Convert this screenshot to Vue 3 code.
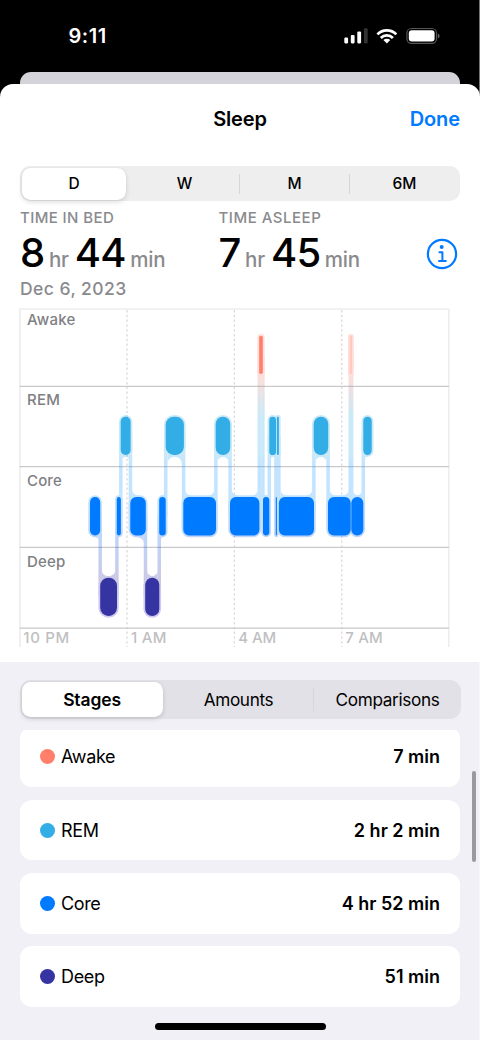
<script setup>
const PAD = 1.75

const levels = {
  awake: { y: 335.7, color: '#ff7f6b' },
  rem: { y: 416.7, color: '#32ade6' },
  core: { y: 497.1, color: '#007aff' },
  deep: { y: 577.7, color: '#3634a3' },
}
const order = ['awake', 'rem', 'core', 'deep']
const H = 38.3

// Sleep segments in time order: [stage, start, end]
const segments = [
  ['core', 90, 100.2],
  ['deep', 100.2, 117],
  ['core', 116.8, 120.9],
  ['rem', 120.7, 130.6],
  ['core', 130.3, 145.8],
  ['deep', 145.2, 159.3],
  ['core', 159.2, 165.7],
  ['rem', 165.7, 183.9],
  ['core', 183.3, 216],
  ['rem', 215.7, 230.2],
  ['core', 230, 259.4],
  ['awake', 259.2, 262.8],
  ['core', 263, 269.3],
  ['rem', 269.3, 276],
  ['core', 275.8, 276.9],
  ['rem', 276.9, 278.9],
  ['core', 278.9, 314],
  ['rem', 313.7, 328.2],
  ['core', 328, 350.7],
  ['awake', 349.8, 352],
  ['core', 351.3, 363.3],
  ['rem', 363.3, 371.7],
].map(([stage, a, b]) => ({
  stage, a, b, w: b - a, y: levels[stage].y, color: levels[stage].color,
  pale: stage === 'awake' && a > 300,
}))

const radius = (w, stage) => Math.min(w / 2, stage === 'core' ? 5.8 : 8.2)

// Connector strips between consecutive stages, with concave corners where they meet a bar
const links = []
for (let i = 0; i < segments.length - 1; i++) {
  const l = segments[i]
  const r = segments[i + 1]
  const up = order.indexOf(l.stage) < order.indexOf(r.stage) ? l : r
  const low = up === l ? r : l
  const t = (l.b + r.a) / 2
  const dir = up === l ? -1 : 1
  const top = up.y + H + PAD
  const bottom = low.y - PAD
  const ru = Math.max(0, Math.min(7, up.w / 2 - PAD))
  const rl = Math.max(0, Math.min(5.5, low.w / 2 - PAD))
  const xu = t + dir * PAD
  const xl = t - dir * PAD
  const sweep = dir < 0 ? 1 : 0
  links.push(`M${t - PAD} ${up.y + H / 2}H${t + PAD}V${low.y + H / 2}H${t - PAD}Z`)
  links.push(`M${xu} ${top - 5}H${xu + dir * ru}V${top}A${ru} ${ru} 0 0 ${sweep} ${xu} ${top + ru}Z`)
  links.push(`M${xl} ${bottom + 4}H${xl - dir * rl}V${bottom}A${rl} ${rl} 0 0 ${sweep} ${xl} ${bottom - rl}Z`)
}

const stageLabels = [
  ['Awake', 325, 48.3], ['REM', 405.3, 33], ['Core', 486, 34.8], ['Deep', 566.5, 38.3],
]
const hours = [
  ['10 PM', 23.3, 46], ['1 AM', 131, 35.5], ['4 AM', 238.2, 38], ['7 AM', 345.3, 37.3],
]
const ranges = ['D', 'W', 'M', '6M']
const tabs = ['Stages', 'Amounts', 'Comparisons']
const rows = [
  { name: 'Awake', value: '7 min', color: '#ff7f6b' },
  { name: 'REM', value: '2 hr 2 min', color: '#32ade6' },
  { name: 'Core', value: '4 hr 52 min', color: '#007aff' },
  { name: 'Deep', value: '51 min', color: '#3634a3' },
]
</script>

<template>
  <div class="screen">
    <div class="status">
      <span class="clock">9:11</span>
      <svg class="status-icons" width="98" height="20" viewBox="343 26 98 20">
        <g fill="#fff">
          <rect x="344.3" y="37.6" width="3.8" height="5.8" rx="1.1" />
          <rect x="350.8" y="35" width="3.8" height="8.4" rx="1.1" />
          <rect x="357.3" y="31.4" width="3.8" height="12" rx="1.1" />
          <rect x="363.9" y="28.3" width="3.8" height="15.1" rx="1.1" fill="#333" />
        </g>
        <g fill="none" stroke="#fff" stroke-width="2.7">
          <path d="M377.4 34.4A13.2 13.2 0 0 1 396.3 34.4" />
          <path d="M380.8 38A8.4 8.4 0 0 1 392.9 38" />
        </g>
        <path d="M383.4 40.1A5 5 0 0 1 390.3 40.1L386.85 43.5Z" fill="#fff" />
        <rect x="406.9" y="28.5" width="29.6" height="14.8" rx="4.6" fill="none" stroke="#555" stroke-width="1.2" />
        <rect x="408.8" y="30.3" width="25.8" height="11.3" rx="3" fill="#fff" />
        <path d="M437.8 33.6Q439.6 34.3 439.6 36T437.8 38.3Z" fill="#666" />
      </svg>
    </div>
    <div class="back-card"></div>

    <main class="sheet">
      <header class="nav">
        <span></span>
        <h1>Sleep</h1>
        <a class="done">Done</a>
      </header>

      <div class="ranges">
        <span v-for="(r, i) in ranges" :key="r" class="range" :class="{ on: i === 0, sep: i > 1 }">{{ r }}</span>
      </div>

      <section class="summary">
        <div class="metric bed">
          <p class="caption">TIME IN BED</p>
          <p class="figure"><b>8</b><i class="hr">hr</i><b>44</b><i>min</i></p>
          <p class="date">Dec 6, 2023</p>
        </div>
        <div class="metric">
          <p class="caption asleep">TIME ASLEEP</p>
          <p class="figure"><b>7</b><i class="hr">hr</i><b>45</b><i>min</i></p>
        </div>
        <svg class="info" width="32" height="32" viewBox="0 0 32 32" fill="none" stroke="#007aff">
          <circle cx="16" cy="16" r="14.1" stroke-width="2.2" />
          <circle cx="15.7" cy="9" r="2" fill="#007aff" stroke="none" />
          <path d="M13.4 14.2H16.4V23M13 23.1H19.8" stroke-width="2" stroke-linecap="round" stroke-linejoin="round" />
        </svg>
      </section>

      <svg class="chart" width="480" height="346" viewBox="0 304 480 346">
        <defs>
          <linearGradient id="halo" gradientUnits="userSpaceOnUse" x1="0" y1="334" x2="0" y2="618">
            <stop offset="0" stop-color="#ff7f6b" />
            <stop offset="0.14" stop-color="#ff7f6b" />
            <stop offset="0.29" stop-color="#32ade6" />
            <stop offset="0.42" stop-color="#32ade6" />
            <stop offset="0.46" stop-color="#1a98ff" />
            <stop offset="0.58" stop-color="#1a98ff" />
            <stop offset="0.715" stop-color="#0a62f0" />
            <stop offset="0.86" stop-color="#3634a3" />
            <stop offset="1" stop-color="#4a35c0" />
          </linearGradient>
        </defs>
        <g stroke="#ededed" stroke-width="1.6">
          <path d="M19.2 309H449M19.9 309V647M448.8 309V647" fill="none" />
        </g>
        <path d="M127 310V647M234.4 310V647M341.8 310V647" stroke="#d8d8da" stroke-width="1.2" stroke-dasharray="2.4 2.4" />
        <path d="M19.5 386.4H449M19.5 466.6H449M19.5 547.4H449M19.5 628.2H449" stroke="#c9c9cb" stroke-width="1.3" />
        <g fill="url(#halo)" opacity="0.26">
          <rect
            v-for="(s, i) in segments" :key="i" :x="s.a - PAD" :y="s.y - PAD" :width="s.w + PAD * 2"
            :height="H + PAD * 2" :rx="radius(s.w, s.stage) + PAD"
          />
          <path v-for="(d, i) in links" :key="'l' + i" :d="d" />
        </g>
        <g>
          <rect
            v-for="(s, i) in segments" :key="i" :x="s.a" :y="s.y" :width="s.w" :height="H"
            :rx="radius(s.w, s.stage)" :fill="s.pale ? '#ffc9c0' : s.color"
          />
        </g>
        <g class="stage-labels">
          <text v-for="[t, y, w] in stageLabels" :key="t" x="27" :y="y" :textLength="w">{{ t }}</text>
        </g>
        <g class="hour-labels">
          <text v-for="[t, x, w] in hours" :key="t" :x="x" y="643.2" :textLength="w">{{ t }}</text>
        </g>
      </svg>

      <section class="details">
        <div class="tabs">
          <span v-for="(t, i) in tabs" :key="t" class="tab" :class="{ on: i === 0, sep: i === 2 }">{{ t }}</span>
        </div>
        <div class="list">
          <div v-for="r in rows" :key="r.name" class="row">
            <span class="dot" :style="{ background: r.color }"></span>
            <span class="name">{{ r.name }}</span>
            <span class="value">{{ r.value }}</span>
          </div>
        </div>
        <div class="scrollbar"></div>
        <div class="home"></div>
      </section>
    </main>
  </div>
</template>

<style>
body { margin: 0; background: #000; }
</style>

<style scoped>
.screen {
  position: relative;
  box-sizing: border-box;
  width: 480px;
  height: 1040px;
  overflow: hidden;
  display: flex;
  flex-direction: column;
  background: #000;
  font-family: Inter, "Liberation Sans", sans-serif;
  color: #000;
}
.screen::after {
  content: "";
  position: absolute;
  top: 0;
  right: 0;
  bottom: 0;
  width: 1px;
  background: rgba(255, 255, 255, 0.45);
}
p, h1 { margin: 0; }
.status {
  height: 72px;
  flex: none;
  display: flex;
  justify-content: space-between;
  box-sizing: border-box;
  padding: 26px 39px 0 68.5px;
}
.clock { color: #fff; font-size: 20px; font-weight: 600; line-height: 21px; letter-spacing: 0.5px; }
.back-card { height: 12px; flex: none; margin: 0 20px; background: #d4d3d9; border-radius: 11px 11px 0 0; }
.sheet {
  flex: 1;
  display: flex;
  flex-direction: column;
  background: #fff;
  border-radius: 13px 13px 0 0;
}
.nav {
  height: 82px;
  box-sizing: border-box;
  padding: 22px 20px 0;
  display: grid;
  grid-template-columns: 1fr auto 1fr;
  line-height: 26px;
  font-size: 20px;
}
h1 { font-size: 20px; font-weight: 600; letter-spacing: -0.15px; }
.done { color: #007aff; font-weight: 600; justify-self: end; letter-spacing: -0.1px; }
.ranges {
  height: 35px;
  margin: 0 20px;
  box-sizing: border-box;
  padding: 2px;
  display: grid;
  grid-template-columns: 106px 1fr 1fr 1fr;
  column-gap: 3px;
  background: #eeeeef;
  border-radius: 10px;
}
.range { position: relative; text-align: center; font-size: 15.5px; font-weight: 500; line-height: 32px; }
.range.on { margin-right: 2px; }
.on { background: #fff; border-radius: 8.5px; box-shadow: 0 2px 5px rgba(0, 0, 0, 0.14), 0 0 1px rgba(0, 0, 0, 0.1); }
.sep::before {
  content: "";
  position: absolute;
  left: -2px;
  top: 6px;
  bottom: 6px;
  width: 1px;
  background: #d6d6d9;
}
.summary { height: 103px; display: flex; padding: 7px 22.5px 0 20px; box-sizing: border-box; }
.metric { flex: 1; }
.bed { flex: 0 0 198.5px; }
.caption { font-size: 15px; font-weight: 500; line-height: 20px; color: #8a8a8e; letter-spacing: 0.4px; white-space: nowrap; }
.asleep { letter-spacing: 0.52px; }
.figure { display: flex; align-items: baseline; height: 50px; line-height: 50px; white-space: nowrap; }
.figure b { font-size: 40px; font-weight: 500; letter-spacing: -0.8px; }
.figure i { font-style: normal; font-size: 20.5px; font-weight: 500; color: #8a8a8e; margin-left: 4.5px; letter-spacing: -0.2px; }
.figure .hr { margin-right: 6px; }
.date { font-size: 17.5px; font-weight: 500; line-height: 22px; color: #8a8a8e; letter-spacing: 0.45px; }
.info { margin-top: 30px; flex: none; }
.chart { flex: none; display: block; }
.chart text { font-size: 15px; font-weight: 450; }
.stage-labels { fill: #808083; }
.hour-labels { fill: #bfbfc2; }
.details {
  position: relative;
  flex: 1;
  margin-top: 11.5px;
  padding: 18.5px 19.5px 0;
  background: #f1f0f6;
  display: flex;
  flex-direction: column;
}
.tabs {
  height: 39px;
  box-sizing: border-box;
  padding: 2px 0 2px 2px;
  display: grid;
  grid-template-columns: 141px 1fr 1fr;
  column-gap: 3px;
  background: #e2e1e7;
  border-radius: 11px;
  flex: none;
}
.tab { position: relative; text-align: center; font-size: 17.2px; line-height: 35px; letter-spacing: -0.35px; }
.tab.on { font-size: 17.5px; font-weight: 600; letter-spacing: -0.15px; }
.list { margin: 11px 0.5px 0; overflow: hidden; display: flex; flex-direction: column; gap: 12.5px; border-radius: 5px 5px 0 0; }
.row {
  height: 60.7px;
  flex: none;
  box-sizing: border-box;
  padding: 0 20px;
  display: flex;
  align-items: center;
  background: #fff;
  border-radius: 12px;
  font-size: 18px;
}
.row:first-child { margin-top: -3.5px; }
.dot { width: 15px; height: 15px; border-radius: 50%; margin-right: 6px; }
.name { letter-spacing: -0.35px; }
.value { margin-left: auto; font-weight: 600; }
.scrollbar { position: absolute; right: 4px; top: 109px; width: 4px; height: 91px; border-radius: 2px; background: #9a999e; }
.home { width: 171px; height: 6.5px; border-radius: 4px; background: #000; margin: 16.5px auto 0; }
</style>
